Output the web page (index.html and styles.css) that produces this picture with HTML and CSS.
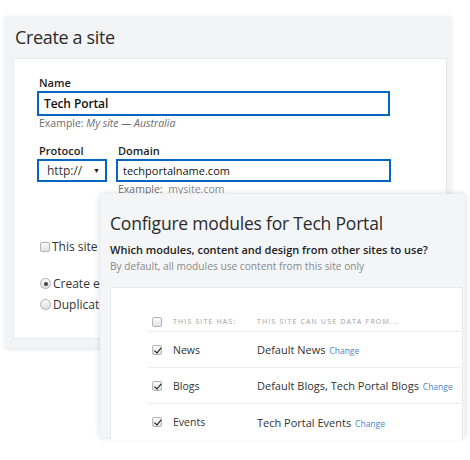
FILE: index.html
```html
<!DOCTYPE html>
<html lang="en">
<head>
  <meta charset="UTF-8" />
  <title>Create a site</title>
  <link rel="stylesheet" href="styles.css">
</head>
<body>
  <div class="stage">

    <!-- step 1: basic site details -->
    <section class="site-panel">
      <h1 class="panel-title">Create a site</h1>
      <div class="site-form">
        <label class="field-label" for="siteName">Name</label>
        <input class="text-input name-input" id="siteName" value="Tech Portal" />
        <p class="hint">Example: <em>My site — Australia</em></p>

        <div class="field-row">
          <div class="field">
            <span class="field-label">Protocol</span>
            <div class="text-input select-input">http://<span class="caret">▼</span></div>
          </div>
          <div class="field">
            <label class="field-label" for="domain">Domain</label>
            <input class="text-input domain-input" id="domain" value="techportalname.com" />
            <p class="hint">Example: <span class="hint-value">mysite.com</span></p>
          </div>
        </div>

        <label class="check-line template-line"><span class="box"></span>This site is a template</label>
        <div class="radio-group">
          <label class="check-line"><span class="radio on"></span>Create empty site</label>
          <label class="check-line"><span class="radio"></span>Duplicate an existing site</label>
        </div>
      </div>
    </section>

    <!-- step 2: module data sources, opens over the form -->
    <section class="modules-panel">
      <h2 class="modules-title">Configure modules for Tech Portal</h2>
      <p class="modules-question">Which modules, content and design from other sites to use?</p>
      <p class="modules-note">By default, all modules use content from this site only</p>

      <div class="modules-card">
        <div class="module-row module-head">
          <span class="box"></span>
          <span>This site has:</span>
          <span>This site can use data from...</span>
        </div>
        <div class="module-row">
          <span class="box checked"></span>
          <span class="module-name">News</span>
          <span class="module-source">Default News <a href="#" class="change">Change</a></span>
        </div>
        <div class="module-row">
          <span class="box checked"></span>
          <span class="module-name">Blogs</span>
          <span class="module-source">Default Blogs, Tech Portal Blogs <a href="#" class="change">Change</a></span>
        </div>
        <div class="module-row">
          <span class="box checked"></span>
          <span class="module-name">Events</span>
          <span class="module-source">Tech Portal Events <a href="#" class="change">Change</a></span>
        </div>
      </div>
    </section>

  </div>
</body>
</html>
```

FILE: styles.css
```css
:root {
  --blue: #0667c3;
  --panel: #f3f4f6;
  --line: #e6e8eb;
  --text: #222222;
  --muted: #777777;
  --link: #4a86c8;
}

* {
  box-sizing: border-box;
}

body {
  margin: 0;
  font-family: 'Open Sans', 'Noto Sans', sans-serif;
  color: var(--text);
  background: #ffffff;
}

.stage {
  position: relative;
  width: 470px;
  height: 460px;
  overflow: hidden;
}

/* create a site */

.site-panel {
  display: flex;
  flex-direction: column;
  width: 446px;
  height: 332px;
  margin: 16px 0 0 5px;
  padding: 0 4px 9px 8px;
  background: var(--panel);
  box-shadow: 0 1px 4px rgba(0, 0, 0, 0.12);
}

.panel-title {
  height: 42px;
  margin: 0;
  padding: 7px 0 0 2px;
  font-size: 18px;
  font-weight: 400;
  letter-spacing: -0.35px;
  line-height: 28px;
  color: #2b2b2b;
}

.site-form {
  flex: 1;
  padding: 16px 0 0 23px;
  background: #ffffff;
  border: 1px solid var(--line);
}

.field-label {
  display: block;
  padding-left: 2px;
  font-size: 11px;
  font-weight: 600;
  line-height: 16px;
  color: #1d1d1d;
}

.text-input {
  display: block;
  height: 25px;
  margin: 0;
  padding: 0 5px;
  border: 2px solid var(--blue);
  border-radius: 0;
  font-family: inherit;
  font-size: 12px;
  color: #111;
  outline: none;
}

.name-input {
  width: 353px;
  font-weight: 600;
  letter-spacing: -0.1px;
}

.hint {
  margin: 0;
  padding-left: 2px;
  font-size: 10.5px;
  line-height: 14px;
  color: #6d6d6d;
}

.hint-value {
  margin-left: 3px;
  color: #8a8a8a;
}

.field-row {
  display: flex;
  gap: 9px;
  margin-top: 13px;
}

.select-input {
  display: flex;
  align-items: center;
  justify-content: space-between;
  width: 70px;
  height: 23px;
  padding: 0 5px 0 8px;
  font-size: 12px;
  color: #333;
}

.caret {
  font-size: 7px;
  color: #111;
}

.domain-input {
  width: 275px;
  height: 23px;
  font-size: 11px;
}

.check-line {
  display: flex;
  align-items: center;
  gap: 2px;
  height: 21px;
  padding-left: 3px;
  font-size: 12px;
  color: #333;
  white-space: nowrap;
}

.template-line {
  margin-top: 40px;
}

.radio-group {
  margin-top: 16px;
}

.box {
  position: relative;
  width: 10px;
  height: 10px;
  border: 1px solid #b4b4b4;
  border-radius: 2px;
  background: linear-gradient(#fbfbfb, #e2e2e2);
}

.box.checked::after {
  content: "";
  position: absolute;
  left: 2.5px;
  top: 0;
  width: 2.5px;
  height: 5.5px;
  border: solid #111;
  border-width: 0 1.7px 1.7px 0;
  transform: rotate(40deg);
}

.radio {
  position: relative;
  width: 11px;
  height: 11px;
  border: 1px solid #b0b0b0;
  border-radius: 50%;
  background: linear-gradient(#fbfbfb, #dedede);
}

.radio.on::after {
  content: "";
  position: absolute;
  left: 2.5px;
  top: 2.5px;
  width: 4px;
  height: 4px;
  border-radius: 50%;
  background: #444;
}

/* configure modules */

.modules-panel {
  position: absolute;
  left: 100px;
  top: 194px;
  display: flex;
  flex-direction: column;
  width: 365px;
  height: 243px;
  padding: 0 2px 0 10px;
  background: #f4f5f7;
  box-shadow: 0 0 6px rgba(0, 0, 0, 0.16);
}

.modules-title {
  margin: 0;
  padding-top: 17px;
  font-size: 17.5px;
  font-weight: 400;
  letter-spacing: -0.2px;
  line-height: 24px;
  color: #2b2b2b;
}

.modules-question {
  margin: 7px 0 0;
  font-size: 11px;
  font-weight: 600;
  line-height: 16px;
  color: #222;
}

.modules-note {
  margin: 1px 0 0;
  font-size: 10.2px;
  line-height: 15px;
  color: #8a8a8a;
}

.modules-card {
  flex: 1;
  margin-top: 13px;
  padding: 25px 0 0 37px;
  background: #ffffff;
  border: 1px solid #e8eaec;
  border-bottom: none;
}

.module-row {
  display: grid;
  grid-template-columns: 21px 84px 1fr;
  align-items: center;
  height: 36px;
  padding-left: 4px;
  border-bottom: 1px solid #eeeeee;
  white-space: nowrap;
}

.module-row:last-child {
  border-bottom: none;
}

.module-head {
  height: 19px;
  padding-bottom: 1px;
  font-size: 7px;
  letter-spacing: 1.15px;
  text-transform: uppercase;
  color: #a0a0a0;
}

.module-name {
  font-size: 10.5px;
  color: #333;
}

.module-source {
  font-size: 11px;
  color: #333;
}

.change {
  margin-left: 1px;
  font-size: 8.5px;
  color: var(--link);
  text-decoration: none;
}
```
